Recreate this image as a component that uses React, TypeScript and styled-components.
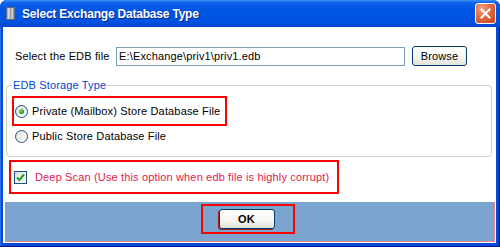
import styled, { createGlobalStyle } from "styled-components";

const GlobalStyle = createGlobalStyle`
  html, body { margin: 0; padding: 0; background: #fff; }
  body {
    font-family: "Liberation Sans", Arial, sans-serif;
    font-size: 11px;
    letter-spacing: 0.15px;
    color: #000;
  }
`;

const Window = styled.div`
  width: 500px;
  height: 247px;
  display: flex;
  flex-direction: column;
  background: #0a48d8;
  border-radius: 7px 7px 0 0;
  box-shadow: inset -1px -1px 0 #00188c, inset 1px 0 0 #2c6ff0;
  overflow: hidden;
`;

const TitleBar = styled.div`
  height: 27px;
  flex: none;
  display: flex;
  align-items: center;
  padding: 0 4px 0 6px;
  background: linear-gradient(180deg, #3d8ff7 0%, #0d62ea 10%, #0056e5 35%, #0052e0 80%, #0447d2 100%);
`;

const TitleText = styled.span`
  flex: 1;
  margin-left: 7px;
  color: #fff;
  font-weight: bold;
  font-size: 12px;
  letter-spacing: -0.2px;
  text-shadow: 1px 1px 0 #0b2a8f;
`;

const CloseButton = styled.div`
  width: 19px;
  height: 19px;
  border: 1px solid #fff;
  border-radius: 3px;
  display: flex;
  align-items: center;
  justify-content: center;
  background: radial-gradient(circle at 30% 25%, #f0a080 0%, #e06a42 45%, #c8421c 100%);
`;

const Client = styled.div`
  flex: 1;
  margin: 0 4px 4px 3px;
  background: #fff;
  display: flex;
  flex-direction: column;
  padding: 19px 1px 1px 2px;
`;

const FileRow = styled.div`
  display: flex;
  align-items: center;
  height: 20px;
  margin-left: 10px;
`;

const Label = styled.span`
  width: 101px;
`;

const PathInput = styled.div`
  width: 283px;
  height: 17px;
  border: 1px solid #7f9db9;
  padding: 0 2px;
  display: flex;
  align-items: center;
`;

const XpButton = styled.div<{ $bold?: boolean; $width: number }>`
  width: ${(p) => p.$width}px;
  height: 20px;
  box-sizing: border-box;
  border: 1px solid #003c74;
  border-radius: 3px;
  display: flex;
  align-items: center;
  justify-content: center;
  font-weight: ${(p) => (p.$bold ? "bold" : "normal")};
  background: linear-gradient(180deg, #ffffff 0%, #f6f5f0 60%, #e3e1d6 100%);
`;

const BrowseButton = styled(XpButton)`
  margin-left: 7px;
`;

const Group = styled.fieldset`
  margin: 13px 3px 0 1px;
  padding: 5px 5px 10px 5px;
  border: 1px solid #d0d0bf;
  border-radius: 4px;
`;

const Legend = styled.legend`
  padding: 0 1px;
  color: #0046d5;
`;

const Option = styled.div<{ $boxed?: boolean }>`
  display: flex;
  align-items: center;
  gap: 4px;
  width: fit-content;
  height: ${(p) => (p.$boxed ? 26 : 20)}px;
  padding: ${(p) => (p.$boxed ? "0 5px 0 1px" : "0 0 0 3px")};
  border: ${(p) => (p.$boxed ? "2px solid #ff0000" : "none")};
`;

const Radio = styled.span<{ $checked?: boolean }>`
  width: 11px;
  height: 11px;
  border-radius: 50%;
  border: 1px solid #1c5180;
  display: flex;
  align-items: center;
  justify-content: center;
  background: linear-gradient(135deg, #dcdcd5 0%, #f4f4f0 60%, #ffffff 100%);
  &::after {
    content: "";
    display: ${(p) => (p.$checked ? "block" : "none")};
    width: 5px;
    height: 5px;
    border-radius: 50%;
    background: radial-gradient(circle at 35% 35%, #7ee07e 0%, #21a121 60%, #158015 100%);
  }
`;

const ScanBox = styled.div`
  display: flex;
  align-items: center;
  gap: 8px;
  margin: 3px 0 0 4px;
  width: 323px;
  height: 30px;
  padding-left: 3px;
  border: 2px solid #ff0000;
`;

const CheckBox = styled.span`
  width: 11px;
  height: 11px;
  border: 1px solid #1c5180;
  display: flex;
  align-items: center;
  justify-content: center;
  background: linear-gradient(135deg, #dcdcd5 0%, #f4f4f0 60%, #ffffff 100%);
`;

const ScanText = styled.span`
  color: #e5204c;
`;

const Band = styled.div`
  margin-top: 8px;
  flex: 1;
  display: flex;
  justify-content: center;
  align-items: flex-start;
  padding-top: 2px;
  background: #7ba5d0;
  border-right: 1px solid #e58a8a;
  border-bottom: 1px solid #e58a8a;
`;

const OkFrame = styled.div`
  width: 90px;
  height: 26px;
  margin-right: 4px;
  border: 2px solid #ff0000;
  display: flex;
  align-items: center;
  justify-content: center;
`;

const OkButton = styled(XpButton)`
  box-shadow: -1px 1px 0 #a31f1f;
  margin-right: 2px;
`;

const DbIcon = () => (
  <svg width="9" height="13" viewBox="0 0 9 13">
    <defs>
      <linearGradient id="db" x1="0" x2="1" y1="0" y2="0">
        <stop offset="0" stopColor="#8a8a8a" />
        <stop offset="0.3" stopColor="#e8e8e8" />
        <stop offset="0.5" stopColor="#9a9a9a" />
        <stop offset="0.7" stopColor="#dadada" />
        <stop offset="1" stopColor="#707070" />
      </linearGradient>
    </defs>
    <rect x="0.5" y="0.5" width="8" height="12" fill="url(#db)" stroke="#5a6a8a" />
  </svg>
);

export default function App() {
  return (
    <>
      <GlobalStyle />
      <Window>
        <TitleBar>
          <DbIcon />
          <TitleText>Select Exchange Database Type</TitleText>
          <CloseButton>
            <svg width="11" height="11" viewBox="0 0 11 11">
              <path d="M1.5 1.5 L9.5 9.5 M9.5 1.5 L1.5 9.5" stroke="#fff" strokeWidth="2" strokeLinecap="square" />
            </svg>
          </CloseButton>
        </TitleBar>
        <Client>
          <FileRow>
            <Label>Select the EDB file</Label>
            <PathInput>E:\Exchange\priv1\priv1.edb</PathInput>
            <BrowseButton $width={55}>Browse</BrowseButton>
          </FileRow>
          <Group>
            <Legend>EDB Storage Type</Legend>
            <Option $boxed>
              <Radio $checked />
              Private (Mailbox) Store Database File
            </Option>
            <Option>
              <Radio />
              Public Store Database File
            </Option>
          </Group>
          <ScanBox>
            <CheckBox>
              <svg width="9" height="9" viewBox="0 0 9 9">
                <path d="M1 4.5 L3.5 7 L8 1.5" fill="none" stroke="#21a121" strokeWidth="2" />
              </svg>
            </CheckBox>
            <ScanText>Deep Scan (Use this option when edb file is highly corrupt)</ScanText>
          </ScanBox>
          <Band>
            <OkFrame>
              <OkButton $width={56} $bold>
                OK
              </OkButton>
            </OkFrame>
          </Band>
        </Client>
      </Window>
    </>
  );
}
